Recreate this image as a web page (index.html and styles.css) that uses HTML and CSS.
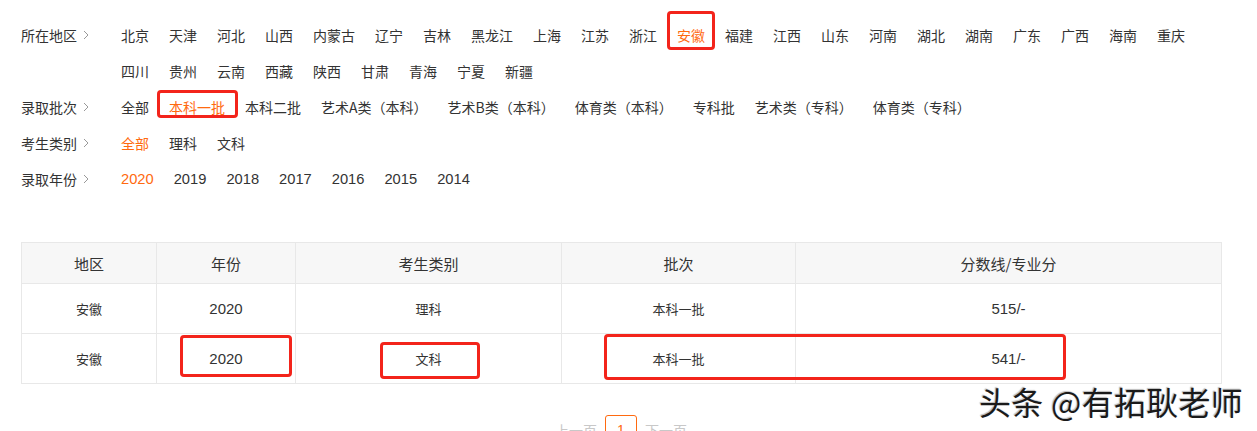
FILE: index.html
```html
<!DOCTYPE html>
<html lang="zh">
<head>
<meta charset="utf-8">
<title>分数线</title>
<link rel="stylesheet" href="styles.css">
</head>
<body>
<div class="page">
  <div class="filters">
    <div class="frow">
      <div class="flabel">所在地区<svg class="chev" viewBox="0 0 6 10" width="6" height="10"><path d="M1 1 L5 5 L1 9" fill="none" stroke="#999" stroke-width="1"/></svg></div>
      <div class="opts">
        <span>北京</span><span>天津</span><span>河北</span><span>山西</span><span>内蒙古</span><span>辽宁</span><span>吉林</span><span>黑龙江</span><span>上海</span><span>江苏</span><span>浙江</span><span class="on mark mark-ah">安徽</span><span>福建</span><span>江西</span><span>山东</span><span>河南</span><span>湖北</span><span>湖南</span><span>广东</span><span>广西</span><span>海南</span><span>重庆</span><span>四川</span><span>贵州</span><span>云南</span><span>西藏</span><span>陕西</span><span>甘肃</span><span>青海</span><span>宁夏</span><span>新疆</span>
      </div>
    </div>
    <div class="frow">
      <div class="flabel">录取批次<svg class="chev" viewBox="0 0 6 10" width="6" height="10"><path d="M1 1 L5 5 L1 9" fill="none" stroke="#999" stroke-width="1"/></svg></div>
      <div class="opts">
        <span>全部</span><span class="on mark mark-bk">本科一批</span><span>本科二批</span><span>艺术A类（本科）</span><span>艺术B类（本科）</span><span>体育类（本科）</span><span>专科批</span><span>艺术类（专科）</span><span>体育类（专科）</span>
      </div>
    </div>
    <div class="frow">
      <div class="flabel">考生类别<svg class="chev" viewBox="0 0 6 10" width="6" height="10"><path d="M1 1 L5 5 L1 9" fill="none" stroke="#999" stroke-width="1"/></svg></div>
      <div class="opts">
        <span class="on">全部</span><span>理科</span><span>文科</span>
      </div>
    </div>
    <div class="frow">
      <div class="flabel">录取年份<svg class="chev" viewBox="0 0 6 10" width="6" height="10"><path d="M1 1 L5 5 L1 9" fill="none" stroke="#999" stroke-width="1"/></svg></div>
      <div class="opts nums">
        <span class="on">2020</span><span>2019</span><span>2018</span><span>2017</span><span>2016</span><span>2015</span><span>2014</span>
      </div>
    </div>
  </div>

  <div class="tablewrap">
    <table class="scores">
      <colgroup>
        <col class="c1"><col class="c2"><col class="c3"><col class="c4"><col class="c5">
      </colgroup>
      <thead>
        <tr><th>地区</th><th>年份</th><th>考生类别</th><th>批次</th><th>分数线/专业分</th></tr>
      </thead>
      <tbody>
        <tr><td>安徽</td><td class="num">2020</td><td>理科</td><td>本科一批</td><td class="num">515/-</td></tr>
        <tr><td>安徽</td><td class="num">2020</td><td>文科</td><td>本科一批</td><td class="num">541/-</td></tr>
      </tbody>
    </table>
    <div class="box box-year"></div>
    <div class="box box-type"></div>
    <div class="box box-row"></div>
  </div>

  <div class="pager">
    <span class="pg-dis">上一页</span>
    <span class="pg-cur">1</span>
    <span class="pg-dis">下一页</span>
  </div>

  <div class="watermark">头条 @有拓耿老师</div>
</div>
</body>
</html>
```

FILE: styles.css
```css
html, body {
  margin: 0;
  padding: 0;
  background: #fff;
}

body {
  font-family: "Microsoft YaHei", "Noto Sans CJK SC", "Noto Sans", sans-serif;
  color: #333;
  width: 1257px;
  height: 431px;
  overflow: hidden;
}

.page {
  position: relative;
  padding: 17px 0 0 21px;
  height: 431px;
  box-sizing: border-box;
}

.filters {
  display: flex;
  flex-direction: column;
}

.frow {
  display: flex;
  align-items: flex-start;
}

.flabel {
  width: 100px;
  flex: none;
  font-size: 14px;
  line-height: 36px;
  height: 36px;
  display: flex;
  align-items: center;
  color: #333;
}

.chev {
  margin-left: 6px;
  display: block;
}

.opts {
  width: 1100px;
  display: flex;
  flex-wrap: wrap;
  column-gap: 20px;
  font-size: 14px;
}

.opts span {
  line-height: 36px;
  height: 36px;
  color: #333;
  white-space: nowrap;
}

.opts.nums span {
  font-family: "Liberation Sans", "Noto Sans CJK SC", sans-serif;
  font-size: 14.7px;
}

.opts span.on {
  color: #ff6a10;
}

.mark {
  position: relative;
}

.mark::after {
  content: "";
  position: absolute;
  border: 3px solid #f3241b;
  border-radius: 4px;
  box-sizing: border-box;
}

.mark-ah::after {
  left: -10px;
  right: -10px;
  top: -6px;
  bottom: 3px;
}

.mark-bk::after {
  left: -12px;
  right: -13px;
  top: 1px;
  bottom: 7px;
}

.tablewrap {
  position: relative;
  margin-top: 45px;
  width: 1200px;
}

.scores {
  width: 1200px;
  border-collapse: collapse;
  table-layout: fixed;
}

.c1 { width: 135px; }
.c2 { width: 139px; }
.c3 { width: 266px; }
.c4 { width: 234px; }
.c5 { width: 426px; }

.scores th,
.scores td {
  border: 1px solid #e8e8e8;
  text-align: center;
  padding: 0;
  color: #333;
}

.scores th {
  background: #f7f7f7;
  font-weight: normal;
  font-size: 15px;
  height: 40px;
}

.scores td {
  font-size: 13px;
  height: 49px;
}

.scores td.num {
  font-family: "Liberation Sans", "Noto Sans CJK SC", sans-serif;
  font-size: 15px;
}

.box {
  position: absolute;
  border: 3px solid #f3241b;
  border-radius: 4px;
  box-sizing: border-box;
}

.box-year {
  left: 159px;
  top: 93px;
  width: 112px;
  height: 42px;
}

.box-type {
  left: 359px;
  top: 100px;
  width: 100px;
  height: 37px;
}

.box-row {
  left: 583px;
  top: 92px;
  width: 462px;
  height: 46px;
}

.pager {
  display: flex;
  justify-content: center;
  align-items: center;
  gap: 8px;
  width: 1200px;
  margin-top: 31px;
  font-size: 14px;
}

.pg-dis {
  color: #c8c8c8;
  line-height: 30px;
}

.pg-cur {
  width: 32px;
  height: 30px;
  box-sizing: border-box;
  border: 1px solid #ff6a10;
  border-radius: 3px;
  color: #ff6a10;
  display: flex;
  justify-content: center;
  align-items: center;
  font-family: "Liberation Sans", sans-serif;
}

.watermark {
  position: absolute;
  left: 979px;
  top: 380px;
  font-size: 32px;
  line-height: 42px;
  color: #1a1a1a;
  white-space: nowrap;
  text-shadow: 1px 1px 1px #fff, -1px -1px 1px #bbb;
  letter-spacing: 0.3px;
}
```
